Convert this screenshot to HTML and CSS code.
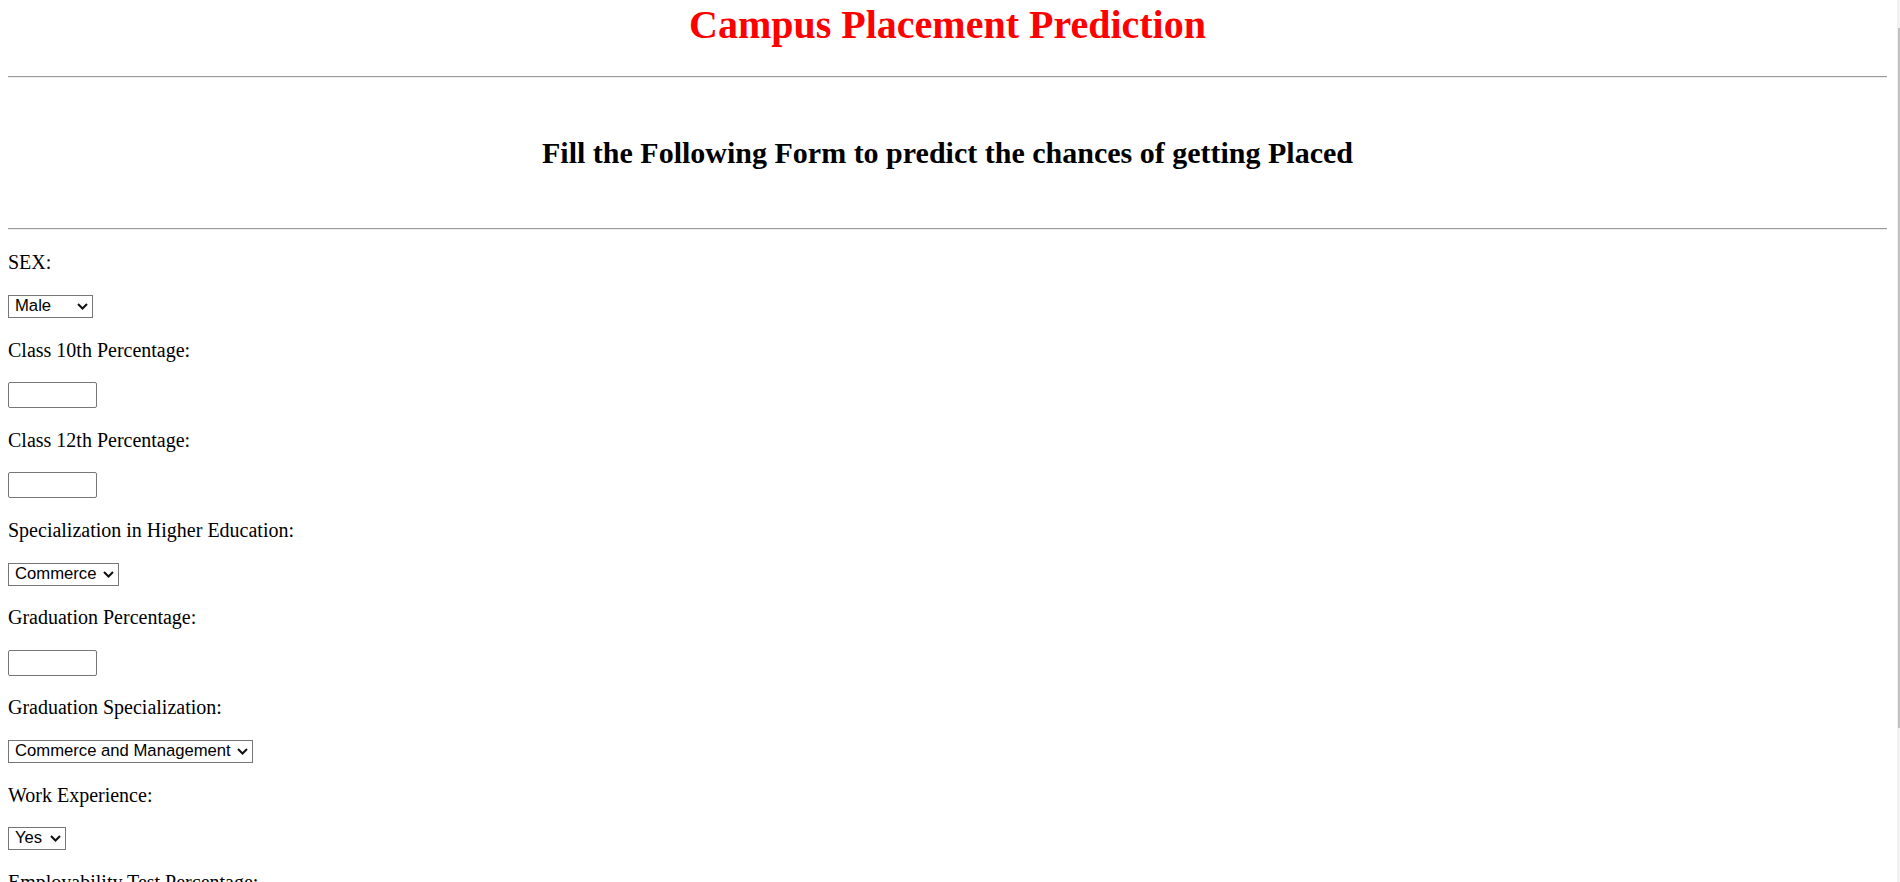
FILE: index.html
```html
<!DOCTYPE html>
<html lang="en">
<head>
<meta charset="utf-8">
<title>Campus Placement Prediction</title>
<link rel="stylesheet" href="styles.css">
</head>
<body>
  <h1 class="title">Campus Placement Prediction</h1>
  <hr class="rule rule-top">
  <h2 class="subtitle">Fill the Following Form to predict the chances of getting Placed</h2>
  <hr class="rule rule-bottom">

  <form class="form">
    <label class="label" for="sex">SEX:</label>
    <span class="selwrap">
      <select class="ctl sel sel-sex" id="sex" name="sex">
        <option>Male</option>
        <option>Female</option>
      </select>
      <svg class="chev" viewBox="0 0 11 7" width="11" height="7" aria-hidden="true"><polyline points="1,1 5.5,5.5 10,1" fill="none" stroke="#111" stroke-width="2"/></svg>
    </span>

    <label class="label" for="ssc">Class 10th Percentage:</label>
    <input class="ctl inp" id="ssc" name="ssc_p" type="text">

    <label class="label" for="hsc">Class 12th Percentage:</label>
    <input class="ctl inp" id="hsc" name="hsc_p" type="text">

    <label class="label" for="hsc_s">Specialization in Higher Education:</label>
    <span class="selwrap">
      <select class="ctl sel sel-hsc" id="hsc_s" name="hsc_s">
        <option>Commerce</option>
        <option>Science</option>
        <option>Arts</option>
      </select>
      <svg class="chev" viewBox="0 0 11 7" width="11" height="7" aria-hidden="true"><polyline points="1,1 5.5,5.5 10,1" fill="none" stroke="#111" stroke-width="2"/></svg>
    </span>

    <label class="label" for="degree">Graduation Percentage:</label>
    <input class="ctl inp" id="degree" name="degree_p" type="text">

    <label class="label" for="degree_t">Graduation Specialization:</label>
    <span class="selwrap">
      <select class="ctl sel sel-degree" id="degree_t" name="degree_t">
        <option>Commerce and Management</option>
        <option>Science and Technology</option>
        <option>Others</option>
      </select>
      <svg class="chev" viewBox="0 0 11 7" width="11" height="7" aria-hidden="true"><polyline points="1,1 5.5,5.5 10,1" fill="none" stroke="#111" stroke-width="2"/></svg>
    </span>

    <label class="label" for="workex">Work Experience:</label>
    <span class="selwrap">
      <select class="ctl sel sel-workex" id="workex" name="workex">
        <option>Yes</option>
        <option>No</option>
      </select>
      <svg class="chev" viewBox="0 0 11 7" width="11" height="7" aria-hidden="true"><polyline points="1,1 5.5,5.5 10,1" fill="none" stroke="#111" stroke-width="2"/></svg>
    </span>

    <label class="label" for="etest">Employability Test Percentage:</label>
    <input class="ctl inp" id="etest" name="etest_p" type="text">

    <label class="label" for="spec">MBA Specialization:</label>
    <span class="selwrap">
      <select class="ctl sel sel-spec" id="spec" name="specialisation">
        <option>Marketing and Finance</option>
        <option>Marketing and HR</option>
      </select>
      <svg class="chev" viewBox="0 0 11 7" width="11" height="7" aria-hidden="true"><polyline points="1,1 5.5,5.5 10,1" fill="none" stroke="#111" stroke-width="2"/></svg>
    </span>

    <label class="label" for="mba">MBA Percentage:</label>
    <input class="ctl inp" id="mba" name="mba_p" type="text">

    <button class="ctl btn" type="submit">Predict</button>
  </form>

  <div class="scrollstrip"><div class="scrollthumb"></div></div>
</body>
</html>
```

FILE: styles.css
```css
html {
  scrollbar-width: none;
}

body {
  margin: 0 13px 0 8px;
  background: #ffffff;
  color: #000000;
  font-family: "Liberation Serif", "Times New Roman", serif;
  font-size: 20px;
}

.title {
  margin: 2px 0 0;
  font-size: 40px;
  line-height: 46px;
  font-weight: bold;
  color: #ff0000;
  text-align: center;
}

.rule {
  display: block;
  height: 0;
  border: 0;
  border-top: 1px solid #9a9a9a;
  border-bottom: 1px solid #eeeeee;
  margin: 0;
}

.rule-top {
  margin-top: 28px;
}

.subtitle {
  margin: 57px 0 58px;
  font-size: 30px;
  line-height: 35px;
  font-weight: bold;
  text-align: center;
}

.form {
  display: flex;
  flex-direction: column;
  align-items: flex-start;
  gap: 20.6px;
  margin-top: 21.4px;
  padding-bottom: 40px;
}

.label {
  display: block;
  line-height: 23px;
  height: 23px;
}

.ctl {
  box-sizing: border-box;
  margin: 0;
  font-family: "Liberation Sans", Arial, sans-serif;
  font-size: 16.67px;
  color: #000000;
}

.selwrap {
  position: relative;
  display: block;
  height: 23px;
}

.sel {
  display: block;
  -webkit-appearance: none;
  appearance: none;
  height: 23px;
  line-height: 19px;
  border: 1px solid #767676;
  border-radius: 0;
  background-color: #ffffff;
  padding: 0 20px 2px 6px;
}

.chev {
  position: absolute;
  right: 5px;
  top: 8px;
  pointer-events: none;
}

.sel-sex { width: 85px; }
.sel-hsc { width: 111px; }
.sel-degree { width: 245px; }
.sel-workex { width: 58px; }
.sel-spec { width: 220px; }

.inp {
  width: 89px;
  height: 26px;
  border: 1px solid #767676;
  border-radius: 2px;
  background: #ffffff;
  padding: 1px 3px;
}

.btn {
  height: 26px;
  padding: 1px 8px;
  border: 1px solid #767676;
  border-radius: 3px;
  background: #efefef;
}

.scrollstrip {
  position: fixed;
  top: 0;
  right: 0;
  width: 3px;
  height: 100%;
  background: #f1f1f1;
}

.scrollthumb {
  margin-top: 28px;
  margin-left: 1px;
  width: 2px;
  height: 700px;
  background: #c1c1c1;
}
```
